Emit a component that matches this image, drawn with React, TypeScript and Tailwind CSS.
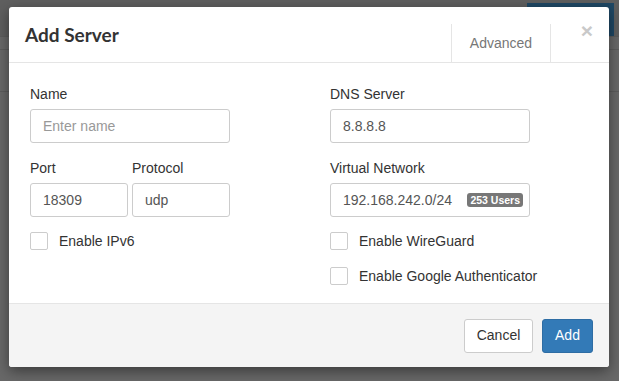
import React from "react";

// Hintergrundseite (abgedunkelt) + "Add Server" Dialog
function Feld({
  label,
  wert,
  platzhalter,
  breite = "w-[200px]",
  badge,
}: {
  label?: string;
  wert?: string;
  platzhalter?: string;
  breite?: string;
  badge?: string;
}) {
  return (
    <div className="flex flex-col">
      {label && <label className="mb-[5px] h-5 text-[14px] leading-5 text-[#333]">{label}</label>}
      <div
        className={`relative flex h-[34px] items-center rounded-[3px] border border-[#ccc] bg-white px-3 ${breite}`}
      >
        {wert ? (
          <span className="text-[14px] text-[#555]">{wert}</span>
        ) : (
          <span className="text-[14px] text-[#999]">{platzhalter}</span>
        )}
        {badge && (
          <span className="absolute right-[6px] top-[9px] flex h-[14px] items-center rounded-[3px] bg-[#777] px-[3px] text-[10.5px] font-bold leading-none text-white">
            {badge}
          </span>
        )}
      </div>
    </div>
  );
}

function Checkbox({ text }: { text: string }) {
  return (
    <div className="flex h-[18px] items-center gap-[11px]">
      <span className="h-[18px] w-[18px] rounded-[2px] border border-[#ccc] bg-white" />
      <span className="text-[14px] text-[#333]">{text}</span>
    </div>
  );
}

export default function App() {
  return (
    <div
      className="relative h-[381px] w-[619px] overflow-hidden bg-[#686868]"
      style={{ fontFamily: '"Liberation Sans", Arial, sans-serif' }}
    >
      {/* Seite hinter dem Overlay */}
      <div className="flex h-[37px] justify-end border-b border-[#5c5c5c] bg-[#5f5f5f]">
        <div className="mr-[5px] mt-[3px] w-[87px] bg-[#1f4865]" />
      </div>
      <div className="h-[13px] border-b border-[#5c5c5c]" />
      <div className="h-[42px] border-b border-[#5c5c5c]" />

      {/* Dialog */}
      <div className="absolute left-[9px] top-[7px] w-[600px] rounded-[3px] bg-white shadow-[0_4px_14px_rgba(0,0,0,0.45)]">
        <div className="relative flex h-[56px] items-start justify-between border-b border-[#e5e5e5]">
          <h4
            className="ml-[16px] mt-[16px] text-[19px] font-bold leading-6 text-[#333]"
            style={{ fontFamily: "Lato, sans-serif" }}
          >
            Add Server
          </h4>
          <div className="mr-[58px] mt-[17px] flex h-[39px] w-[100px] items-center justify-center border-x border-[#e5e5e5]">
            <span className="text-[14px] text-[#777]">Advanced</span>
          </div>
          <span className="absolute right-[16px] top-[12px] text-[21px] font-bold leading-6 text-[#c9c9c9]">×</span>
        </div>

        <div className="grid grid-cols-2 pb-[18px] pt-[21px]">
          <div className="flex flex-col pl-[21px]">
            <Feld label="Name" platzhalter="Enter name" />
            <div className="mt-[15px] flex gap-[4px]">
              <Feld label="Port" wert="18309" breite="w-[98px]" />
              <Feld label="Protocol" wert="udp" breite="w-[98px]" />
            </div>
            <div className="mt-[15px]">
              <Checkbox text="Enable IPv6" />
            </div>
          </div>
          <div className="flex flex-col pl-[21px]">
            <Feld label="DNS Server" wert="8.8.8.8" />
            <div className="mt-[15px]">
              <Feld label="Virtual Network" wert="192.168.242.0/24" badge="253 Users" />
            </div>
            <div className="mt-[15px] flex flex-col gap-[17px]">
              <Checkbox text="Enable WireGuard" />
              <Checkbox text="Enable Google Authenticator" />
            </div>
          </div>
        </div>

        <div className="flex h-[64px] items-center justify-end gap-[9px] rounded-b-[3px] border-t border-[#e5e5e5] bg-[#f4f4f4] pr-[16px]">
          <button className="h-[34px] w-[69px] rounded-[3px] border border-[#ccc] bg-white text-[14px] text-[#333]">
            Cancel
          </button>
          <button className="h-[34px] w-[51px] rounded-[3px] border border-[#2e6da4] bg-[#337ab7] text-[14px] text-white">
            Add
          </button>
        </div>
      </div>
    </div>
  );
}
